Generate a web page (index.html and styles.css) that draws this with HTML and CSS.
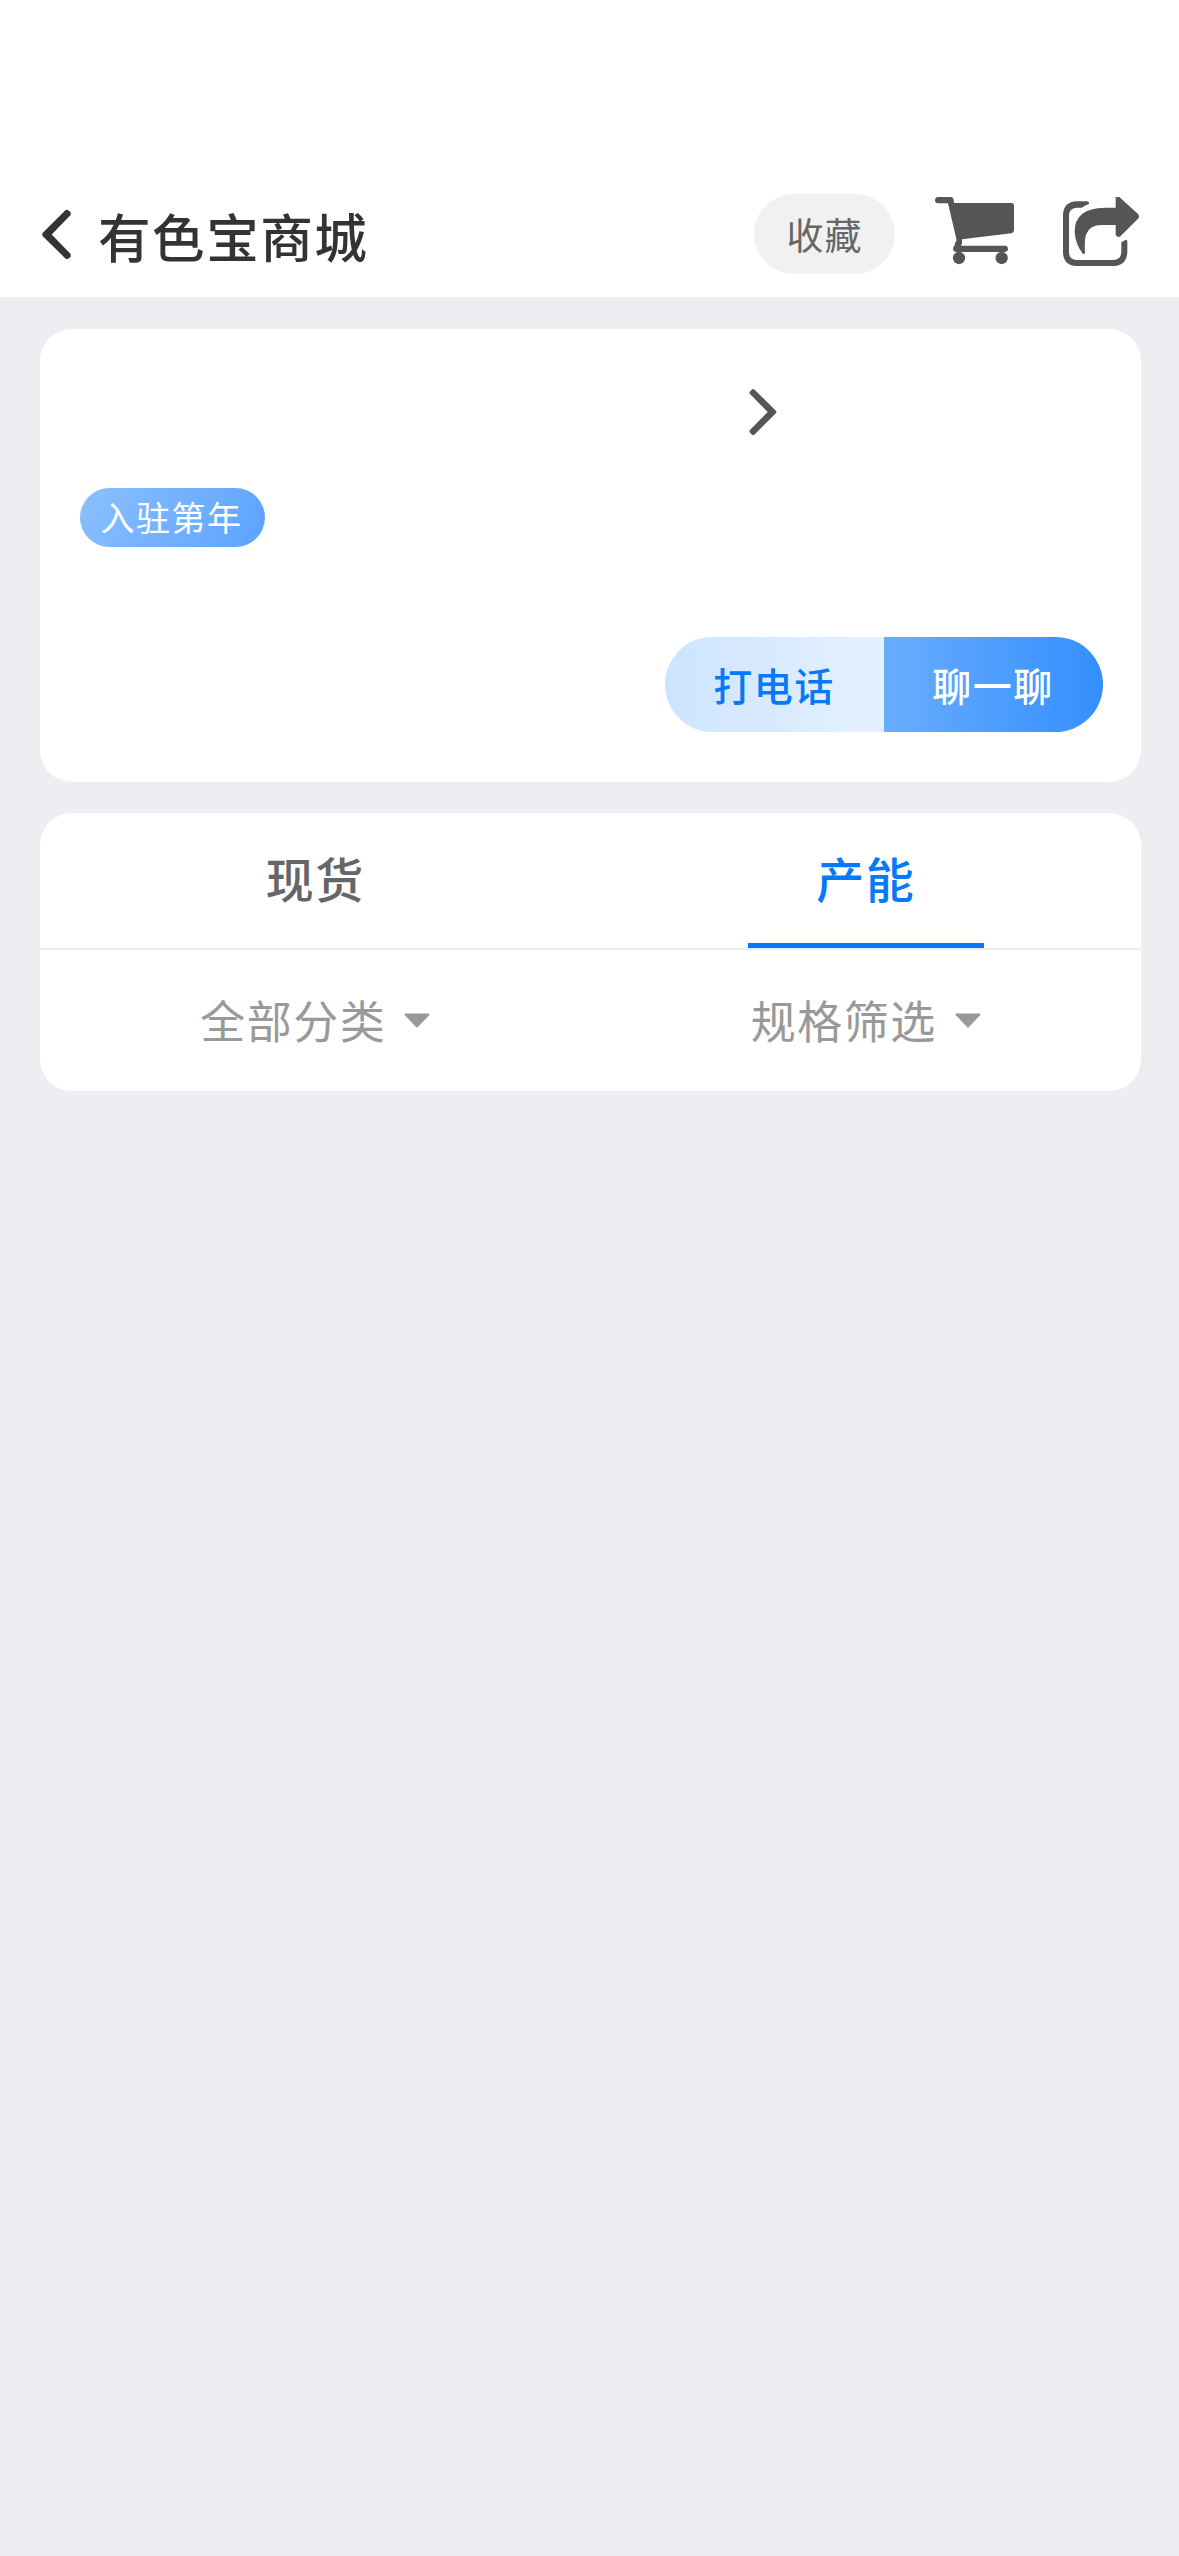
FILE: index.html
```html
<!DOCTYPE html>
<html lang="zh-CN">
<head>
<meta charset="utf-8">
<title>有色宝商城</title>
<link rel="stylesheet" href="styles.css">
</head>
<body>
<header class="header">
  <svg class="back" viewBox="120 84 102 156"><path d="M197 90Q204 87 212 97V105L155 163.500L212 222V230Q204 240 197 236L127 167V160Z" /></svg>
  <h1 class="title">有色宝商城</h1>
  <button class="favorite">收藏</button>
  <svg class="cart" viewBox="582 45 243 234">
    <path d="M594 51H632Q640 51 641 60L642 69H815Q822 69 822 77V151Q822 158 814 160L666 178Q668 189 663 197H795Q804 198 804 206.500T795 216H649Q640 215 639 207Q639 201 643 197Q645 186 650 181L624 70H594Q585 69 585 60.500T594 51Z"/>
    <circle cx="657" cy="234" r="18.500"/><circle cx="785" cy="234" r="18.500"/>
  </svg>
  <svg class="share" viewBox="966 45 234 234">
    <path d="M1010 64H1042Q1048 66 1047 72Q1036 76 1025 83H1010Q987 84 987 108V216Q987 239 1010 240H1120Q1143 239 1144 216V187Q1150 182 1158 179Q1162 179 1162 185V216Q1160 256 1122 258H1008Q971 256 969 218V103Q971 66 1010 64Z"/>
    <path d="M1127 51H1138L1194 102Q1200 109 1194 116L1142 168Q1134 175 1127 165V135H1088Q1048 134 1038 164Q1033 180 1035 218Q1032 226 1026 218Q1006 190 1004 156Q1003 84 1095 83H1127Z"/>
  </svg>
</header>
<main class="content">
  <section class="card shop">
    <div class="shop-name">
      <svg class="chevron" viewBox="0 0 30 48"><path d="M4.300 1.200Q5.300 0.500 6.300 1.500L28.300 23.200V24.800L6.300 46.700Q5 47.500 4 46.700L1.500 44V42.500L19.700 24L1.500 5.500V4Z"/></svg>
    </div>
    <span class="badge">入驻第年</span>
    <div class="actions">
      <button class="action call">打电话</button>
      <button class="action chat">聊一聊</button>
    </div>
  </section>
  <section class="card goods">
    <nav class="tabs">
      <a class="tab"><span class="tab-label">现货</span></a>
      <a class="tab active"><span class="tab-label">产能</span></a>
    </nav>
    <div class="filters">
      <div class="filter">全部分类<svg class="caret" viewBox="0 0 26 15"><path d="M1.500 1.500H24.500L13 13.500Z"/></svg></div>
      <div class="filter">规格筛选<svg class="caret" viewBox="0 0 26 15"><path d="M1.500 1.500H24.500L13 13.500Z"/></svg></div>
    </div>
  </section>
</main>
</body>
</html>
```
FILE: styles.css
```css
* { box-sizing: border-box; }

body {
  margin: 0;
  min-height: 2556px;
  background: #eeedf2;
  font-family: "Noto Sans CJK SC", sans-serif;
  letter-spacing: 1.5px;
}

button {
  border: 0;
  padding: 0;
  font: inherit;
  letter-spacing: inherit;
}

svg { display: block; flex: none; }

.header {
  display: flex;
  align-items: center;
  height: 297px;
  padding: 171px 39px 0 40px;
  background: #fff;
}

.back {
  width: 34px;
  height: 52px;
  fill: #333;
}

.title {
  margin: 2px auto 0 24px;
  font-size: 52.6px;
  line-height: 76px;
  font-weight: 500;
  color: #333;
}

.favorite {
  width: 141px;
  height: 80px;
  padding-bottom: 1px;
  border-radius: 40px;
  background: #f1f1f1;
  font-size: 37px;
  letter-spacing: 1px;
  color: #666;
}

.cart { width: 81px; height: 78px; margin-left: 39px; fill: #555; }
.share { width: 78px; height: 78px; margin-left: 47px; fill: #555; }

.content {
  display: flex;
  flex-direction: column;
  gap: 31px;
  padding: 32px 38px 0 40px;
}

.card { border-radius: 32px; background: #fff; }

.shop {
  display: flex;
  flex-direction: column;
  align-items: flex-start;
  height: 453px;
  padding: 59px 38px 50px 40px;
}

.shop-name { display: flex; padding-left: 668px; }

.chevron {
  width: 30px;
  height: 48px;
  fill: #555;
}

.badge {
  width: 185px;
  height: 59px;
  margin-top: 52px;
  padding-right: 2px;
  border-radius: 30px;
  background: linear-gradient(120deg, #8bc0ff, #5ba3ff);
  font-size: 34px;
  line-height: 57px;
  text-align: center;
  color: #fff;
}

.actions {
  display: flex;
  align-self: flex-end;
  margin-top: auto;
}

.action {
  width: 219px;
  height: 95px;
  padding: 0 1px 1px 0;
  font-size: 39px;
  font-weight: 500;
}

.call {
  border-radius: 48px 0 0 48px;
  background: linear-gradient(90deg, #cde4ff, #e6f1ff);
  color: #0579f9;
}

.chat {
  border-radius: 0 48px 48px 0;
  background: linear-gradient(90deg, #6aadff, #338fff);
  color: #fff;
}

.goods { height: 278px; }

.tabs {
  display: flex;
  height: 137px;
  border-bottom: 2px solid #ededed;
}

.tab {
  display: flex;
  flex: 1;
  justify-content: center;
  font-size: 48px;
  font-weight: 500;
  line-height: 128px;
  color: #666;
}

.active .tab-label {
  width: 236px;
  height: 135px;
  border-bottom: 5px solid #0579f9;
  text-align: center;
  color: #0579f9;
}

.filters { display: flex; height: 141px; }

.filter {
  display: flex;
  flex: 1;
  align-items: center;
  justify-content: center;
  gap: 18px;
  font-size: 45px;
  line-height: 139px;
  height: 139px;
  color: #999;
}

.caret {
  width: 26px;
  height: 15px;
  margin-top: 2px;
  fill: #999;
  stroke: #999;
  stroke-width: 2;
  stroke-linejoin: round;
}
```
